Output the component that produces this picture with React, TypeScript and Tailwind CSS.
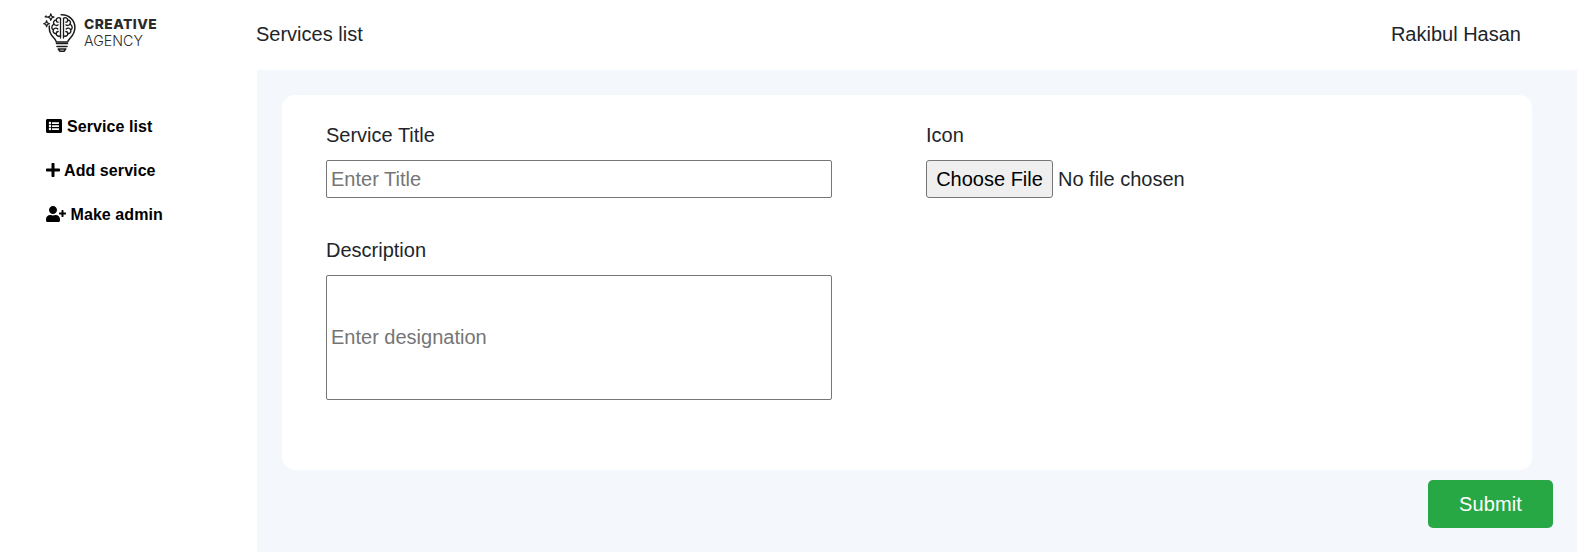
import React from "react";
import { FaListAlt, FaPlus, FaUserPlus } from "react-icons/fa";

function Bulb() {
  return (
    <svg viewBox="0 0 34 40" className="h-10 w-[34px] shrink-0" fill="none" stroke="#1c1c1c" strokeWidth="1.5" strokeLinecap="round" strokeLinejoin="round">
      <path d="M18.2 1.8 C26 1.500 31.900 7.300 31.900 14.500 C31.900 19.500 29.800 22.300 27.300 25 C25.600 26.800 25 28 24.600 29 H13.400 C13 27.500 12 26 10.500 24.500 C8 22 6.300 19 6.300 15 V13" />
      <path d="M17.500 5.500 V25 M20.500 5.500 V25" strokeWidth="1.300" />
      <path d="M17.500 5.500 C16 3.800 13.300 4.800 13.300 7 C10.800 7 9.800 9.500 11 11.200 C8.200 12.500 8.300 16 10.300 17 C9.500 19.300 11.300 21 13.200 20.700 C13.200 23 16 24 17.500 22.500" strokeWidth="1.400" />
      <path d="M20.500 5.500 C22 3.800 24.700 4.800 24.700 7 C27.200 7 28.200 9.500 27 11.200 C29.800 12.500 29.700 16 27.700 17 C28.500 19.300 26.700 21 24.800 20.700 C24.800 23 22 24 20.500 22.500" strokeWidth="1.400" />
      <path d="M13.300 7 C13.300 8.500 14 9.200 15.200 9.200 M11 11.200 C12 12.800 14.200 12.800 15 11.800 M10.300 17 C11 15 13.500 14.500 14.800 16 M13.200 20.700 C13.200 19.200 14 18.500 15.200 18.500 M24.700 7 C24.700 8.500 24 9.200 22.800 9.200 M27 11.200 C26 12.800 23.800 12.800 23 11.800 M27.700 17 C27 15 24.500 14.500 23.200 16 M24.800 20.700 C24.800 19.200 24 18.500 22.800 18.500" strokeWidth="1.300" />
      <path d="M13.500 30.500 H24.500 M14 33.500 H24 M15.300 36 L17 38.300 H21 L22.700 36 Z" strokeWidth="1.600" />
      <path d="M7.800 .8 L8.700 3.200 L11 4.100 L8.700 5 L7.800 7.400 L6.900 5 L4.600 4.100 L6.900 3.200 Z M3.600 7.600 L4.400 9.900 L6.600 10.700 L4.400 11.500 L3.600 13.800 L2.800 11.500 L.7 10.700 L2.800 9.900 Z" strokeWidth="1.200" />
      <path d="M3 2.700 V4.700 M2 3.700 H4" strokeWidth="1" />
    </svg>
  );
}

const links = [
  { label: "Service list", Icon: FaListAlt, iconClass: "mr-[5px] w-4" },
  { label: "Add service", Icon: FaPlus, iconClass: "mr-1 w-[14px]" },
  { label: "Make admin", Icon: FaUserPlus, iconClass: "mr-[4.5px] w-5" },
];

export default function App() {
  return (
    <div className="flex h-[552px] w-full overflow-hidden bg-white font-['Liberation_Sans',Arial,sans-serif] text-xl leading-[30px] text-[#212529]">
      <aside className="w-[257px] shrink-0">
        <div className="flex h-[70px] items-start gap-[7px] pt-[13px] pl-[43px]">
          <Bulb />
          <div className="pt-[3px] font-['Inter',sans-serif] leading-4 text-[#2b2b2b]">
            <div className="text-[13.8px] leading-[17px] font-extrabold tracking-[0.45px]">CREATIVE</div>
            <div className="text-[14.2px] font-light tracking-[0.05px]">AGENCY</div>
          </div>
        </div>
        <nav className="flex flex-col gap-5 pt-[45px] pl-[46px] text-base leading-6 font-bold tracking-[0.08px] text-black">
          {links.map(({ label, Icon, iconClass }) => (
            <a key={label} className="flex h-6 items-center">
              <Icon className={`mb-[2px] h-4 shrink-0 ${iconClass}`} />
              {label}
            </a>
          ))}
        </nav>
      </aside>
      <div className="flex min-w-0 grow flex-col">
        <header className="flex h-[70px] items-start justify-between pt-[19px] pr-14">
          <span className="-ml-px">Services list</span>
          <span>Rakibul Hasan</span>
        </header>
        <form className="flex grow flex-col bg-[#f4f7fc] pt-[25px] pr-6 pl-[25px]">
          <section className="mr-[21px] flex h-[375px] rounded-[12.5px] bg-white pt-[25px] pl-11">
            <div className="flex w-[600px] flex-col items-start">
              <label className="mb-[10px]">Service Title</label>
              <input
                className="h-[38px] w-[506px] rounded-[2px] border border-[#767676] px-1 placeholder:text-[#757575]"
                placeholder="Enter Title"
              />
              <label className="mt-[37px] mb-[10px]">Description</label>
              <input
                className="h-[125px] w-[506px] rounded-[2px] border border-[#767676] px-1 placeholder:text-[#757575]"
                placeholder="Enter designation"
              />
            </div>
            <div className="flex flex-col items-start">
              <span className="mb-[10px]">Icon</span>
              <div className="flex items-center gap-[5px]">
                <button type="button" className="h-[38px] w-[127px] rounded-[3px] border border-[#767676] bg-[#efefef] whitespace-nowrap text-black">
                  Choose File
                </button>
                <span>No file chosen</span>
              </div>
            </div>
          </section>
          <button type="button" className="mt-[10px] h-12 w-[125px] self-end rounded-[5px] bg-[#28a745] tracking-[0.1px] text-white">
            Submit
          </button>
        </form>
      </div>
    </div>
  );
}
